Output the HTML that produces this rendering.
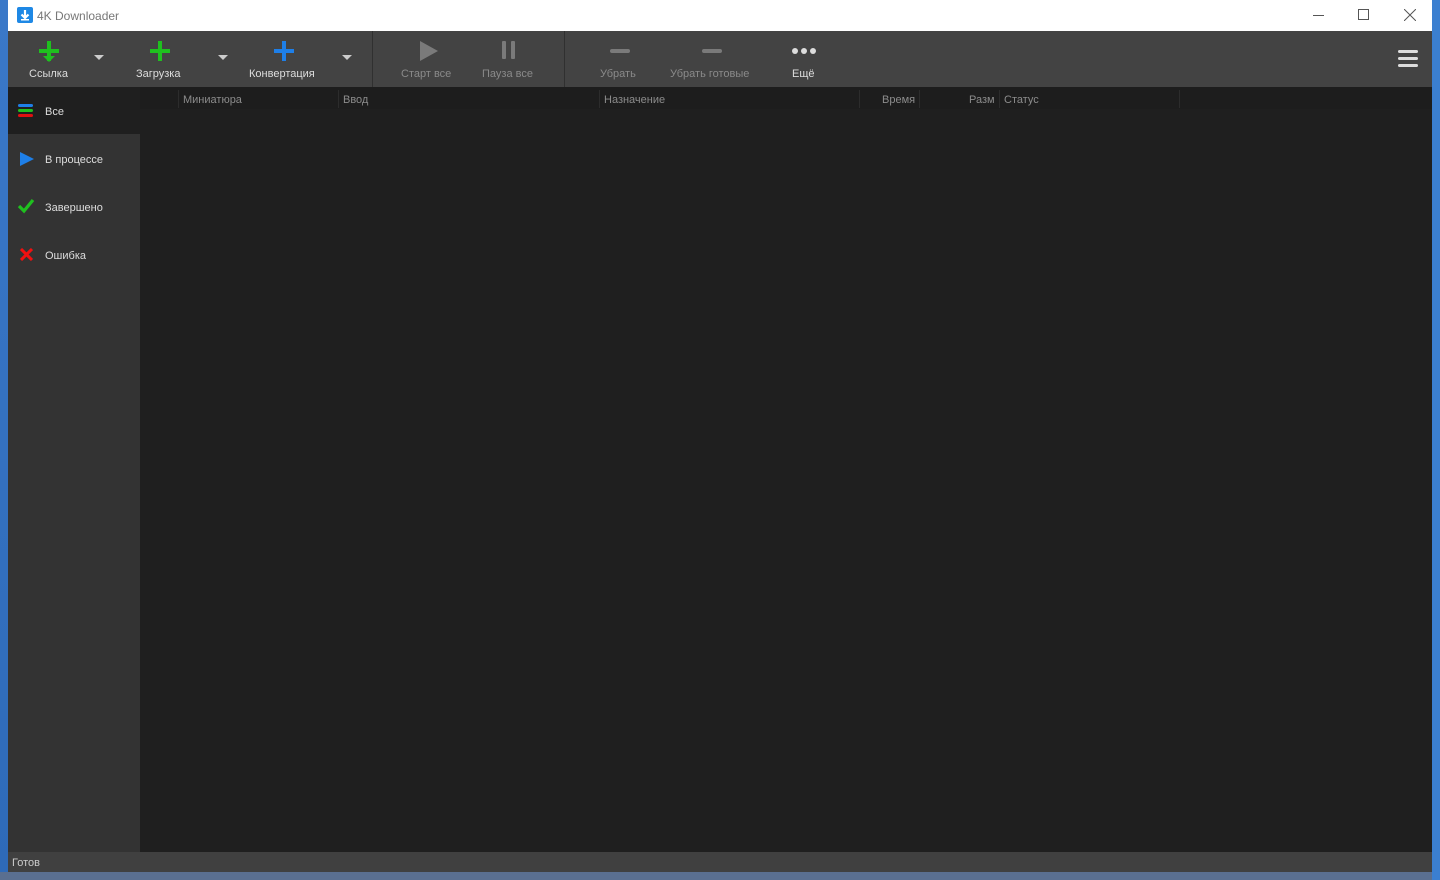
<!DOCTYPE html>
<html><head><meta charset="utf-8"><style>
*{margin:0;padding:0;box-sizing:border-box}
body{width:1440px;height:880px;overflow:hidden;background:#2a5fb0;font-family:"Liberation Sans",sans-serif;position:relative}
.abs{position:absolute}
#desk{left:0;top:0;width:8px;height:880px;background:linear-gradient(#3a78c8,#2e6ab8)}
#bot{left:0;top:872px;width:1440px;height:8px;background:#5a6f90}
#right{left:1432px;top:0;width:8px;height:880px;background:#3b7fd0}
#title{left:8px;top:0;width:1424px;height:31px;background:#fff}
#tool{left:8px;top:31px;width:1424px;height:56px;background:#434343}
#side{left:8px;top:87px;width:132px;height:765px;background:#333}
#main{left:140px;top:87px;width:1292px;height:765px;background:#1f1f1f}
#status{left:8px;top:852px;width:1424px;height:20px;background:#404040}
.t{color:#ddd;font-size:11px;white-space:nowrap}
.g{color:#8a8a8a}
.h{color:#8c8c8c;font-size:11px}
.sep{width:1px;background:#303030}
</style></head><body>
<div id="desk" class="abs"></div><div id="bot" class="abs"></div><div id="right" class="abs"></div>
<div id="title" class="abs">
 <svg class="abs" style="left:9px;top:7px" width="16" height="16"><rect width="16" height="16" rx="2" fill="#1e88e5"/><path d="M8 3v8M4.5 7.5L8 11l3.5-3.5" stroke="#fff" stroke-width="2.2" fill="none"/><rect x="4" y="12" width="8" height="1.5" fill="#fff"/></svg>
 <div class="abs" style="left:29px;top:9px;font-size:12px;color:#777">4K Downloader</div>
 <div class="abs" style="left:1305px;top:15px;width:11px;height:1px;background:#555"></div>
 <div class="abs" style="left:1350px;top:9px;width:11px;height:11px;border:1px solid #555"></div>
 <svg class="abs" style="left:1396px;top:9px" width="12" height="12"><path d="M0 0L12 12M12 0L0 12" stroke="#555" stroke-width="1"/></svg>
</div>
<div id="tool" class="abs">
 <svg class="abs" style="left:30px;top:9px" width="22" height="24"><path d="M11 1v20M1 11h20" stroke="#1fc01f" stroke-width="4"/><path d="M5 16l6 6 6-6z" fill="#1fc01f"/></svg>
 <div class="abs t" style="left:21px;top:37px">Ссылка</div>
 <svg class="abs" style="left:86px;top:24px" width="10" height="6"><path d="M0 0h10L5 5z" fill="#ccc"/></svg>
 <svg class="abs" style="left:141px;top:9px" width="22" height="22"><path d="M11 1v20M1 11h20" stroke="#1fc01f" stroke-width="4"/></svg>
 <div class="abs t" style="left:128px;top:37px">Загрузка</div>
 <svg class="abs" style="left:210px;top:24px" width="10" height="6"><path d="M0 0h10L5 5z" fill="#ccc"/></svg>
 <svg class="abs" style="left:265px;top:9px" width="22" height="22"><path d="M11 1v20M1 11h20" stroke="#1e7fe8" stroke-width="4"/></svg>
 <div class="abs t" style="left:241px;top:37px">Конвертация</div>
 <svg class="abs" style="left:334px;top:24px" width="10" height="6"><path d="M0 0h10L5 5z" fill="#ccc"/></svg>
 <div class="abs sep" style="left:364px;top:0;height:56px"></div>
 <svg class="abs" style="left:412px;top:10px" width="18" height="20"><path d="M0 0L18 10L0 20z" fill="#7a7a7a"/></svg>
 <div class="abs t g" style="left:393px;top:37px">Старт все</div>
 <div class="abs" style="left:494px;top:10px;width:4px;height:18px;background:#7a7a7a;border-radius:1px"></div>
 <div class="abs" style="left:503px;top:10px;width:4px;height:18px;background:#7a7a7a;border-radius:1px"></div>
 <div class="abs t g" style="left:474px;top:37px">Пауза все</div>
 <div class="abs sep" style="left:556px;top:0;height:56px"></div>
 <div class="abs" style="left:602px;top:18px;width:20px;height:4px;background:#7a7a7a;border-radius:2px"></div>
 <div class="abs t g" style="left:592px;top:37px">Убрать</div>
 <div class="abs" style="left:694px;top:18px;width:20px;height:4px;background:#7a7a7a;border-radius:2px"></div>
 <div class="abs t g" style="left:662px;top:37px">Убрать готовые</div>
 <svg class="abs" style="left:783px;top:16px" width="26" height="8"><circle cx="4" cy="4" r="3" fill="#ddd"/><circle cx="13" cy="4" r="3" fill="#ddd"/><circle cx="22" cy="4" r="3" fill="#ddd"/></svg>
 <div class="abs t" style="left:784px;top:37px">Ещё</div>
 <div class="abs" style="left:1390px;top:19px;width:20px;height:3px;background:#ddd;border-radius:2px"></div>
 <div class="abs" style="left:1390px;top:26px;width:20px;height:3px;background:#ddd;border-radius:2px"></div>
 <div class="abs" style="left:1390px;top:33px;width:20px;height:3px;background:#ddd;border-radius:2px"></div>
</div>
<div id="side" class="abs">
 <div class="abs" style="left:0;top:0;width:132px;height:47px;background:#1f1f1f"></div>
 <div class="abs" style="left:10px;top:17px;width:15px;height:3px;background:#1e7fe8;border-radius:2px"></div>
 <div class="abs" style="left:10px;top:22px;width:15px;height:3px;background:#1fc01f;border-radius:2px"></div>
 <div class="abs" style="left:10px;top:27px;width:15px;height:3px;background:#e01010;border-radius:2px"></div>
 <div class="abs t" style="left:37px;top:19px">Все</div>
 <svg class="abs" style="left:12px;top:65px" width="14" height="14"><path d="M0 0L14 7L0 14z" fill="#1e7fe8"/></svg>
 <div class="abs t" style="left:37px;top:67px">В процессе</div>
 <svg class="abs" style="left:9px;top:111px" width="18" height="16"><path d="M2 8l5 5 9-11" stroke="#1fc01f" stroke-width="3.2" fill="none"/></svg>
 <div class="abs t" style="left:37px;top:115px">Завершено</div>
 <svg class="abs" style="left:12px;top:161px" width="13" height="13"><path d="M1 1L12 12M12 1L1 12" stroke="#f01010" stroke-width="3"/></svg>
 <div class="abs t" style="left:37px;top:163px">Ошибка</div>
</div>
<div id="main" class="abs">
 <div class="abs" style="left:0;top:0;width:1292px;height:22px;background:#1d1d1d"></div>
 <div class="abs sep" style="left:38px;top:3px;height:18px;background:#2c2c2c"></div>
 <div class="abs h" style="left:43px;top:7px">Миниатюра</div>
 <div class="abs sep" style="left:198px;top:3px;height:18px;background:#2c2c2c"></div>
 <div class="abs h" style="left:203px;top:7px">Ввод</div>
 <div class="abs sep" style="left:459px;top:3px;height:18px;background:#2c2c2c"></div>
 <div class="abs h" style="left:464px;top:7px">Назначение</div>
 <div class="abs sep" style="left:719px;top:3px;height:18px;background:#2c2c2c"></div>
 <div class="abs h" style="left:742px;top:7px">Время</div>
 <div class="abs sep" style="left:779px;top:3px;height:18px;background:#2c2c2c"></div>
 <div class="abs h" style="left:829px;top:7px">Разм</div>
 <div class="abs sep" style="left:859px;top:3px;height:18px;background:#2c2c2c"></div>
 <div class="abs h" style="left:864px;top:7px">Статус</div>
 <div class="abs sep" style="left:1039px;top:3px;height:18px;background:#2c2c2c"></div>
</div>
<div id="status" class="abs"><div class="abs t" style="left:4px;top:5px;color:#ccc">Готов</div></div>
</body></html>
